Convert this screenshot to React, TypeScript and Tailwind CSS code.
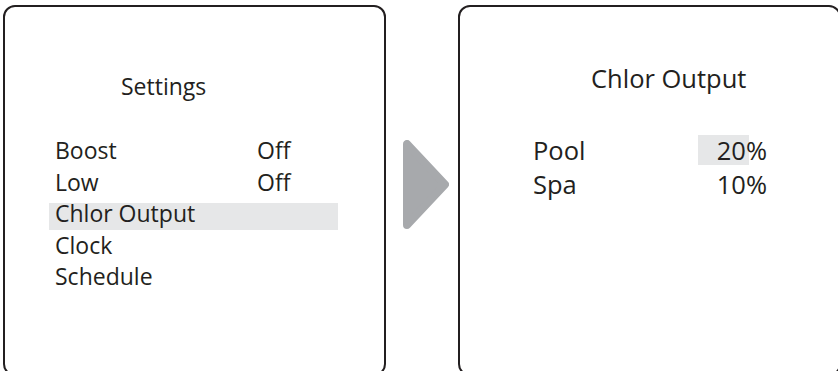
const SETTINGS = [
  { label: "Boost", value: "Off" },
  { label: "Low", value: "Off" },
  { label: "Chlor Output", value: "", active: true },
  { label: "Clock", value: "" },
  { label: "Schedule", value: "" },
];

const OUTPUTS = [
  { label: "Pool", value: "20%", active: true },
  { label: "Spa", value: "10%" },
];

function NextArrow() {
  return (
    <svg width="46" height="89" viewBox="0 0 46 89" className="block">
      <polygon
        points="4,4 4,85 42,44.5"
        fill="#a7a9ac"
        stroke="#a7a9ac"
        strokeWidth="8"
        strokeLinejoin="round"
      />
    </svg>
  );
}

export default function App() {
  return (
    <div className="w-[838px] h-[371px] overflow-hidden bg-white text-[#231f20] font-['Open_Sans',sans-serif]">
      <div className="flex items-start pl-[3px] pt-[5px]">
        {/* Settings menu screen */}
        <div className="w-[383px] h-[371px] shrink-0 border-2 border-[#231f20] rounded-[12px] text-[23px] leading-[31.5px]">
          <div className="pt-[64px] pl-[116px]">Settings</div>
          <div className="mt-[32.5px] ml-[44px] w-[289px]">
            {SETTINGS.map((item) => (
              <div
                key={item.label}
                className={
                  item.active
                    ? "flex pl-[6px] h-[31.5px] bg-[linear-gradient(transparent_5px,#e6e7e8_5px)]"
                    : "flex pl-[6px] h-[31.5px]"
                }
              >
                <span className="w-[202px] shrink-0">{item.label}</span>
                <span>{item.value}</span>
              </div>
            ))}
          </div>
        </div>

        {/* Arrow between screens */}
        <div className="w-[72px] shrink-0 pl-[17px] pt-[135px]">
          <NextArrow />
        </div>

        {/* Chlor Output screen */}
        <div className="w-[383px] h-[371px] shrink-0 border-2 border-[#231f20] rounded-[12px] text-[25.5px] leading-[34px]">
          <div className="pt-[54px] pl-[131px]">Chlor Output</div>
          <div className="mt-[38px] ml-[73px] w-[234px]">
            {OUTPUTS.map((item) => (
              <div key={item.label} className="flex justify-between h-[34px]">
                <span>{item.label}</span>
                <span
                  className={
                    item.active
                      ? "w-[69px] text-right [background:linear-gradient(#e6e7e8,#e6e7e8)_0_2px/51px_30px_no-repeat]"
                      : "w-[69px] text-right"
                  }
                >
                  {item.value}
                </span>
              </div>
            ))}
          </div>
        </div>
      </div>
    </div>
  );
}
